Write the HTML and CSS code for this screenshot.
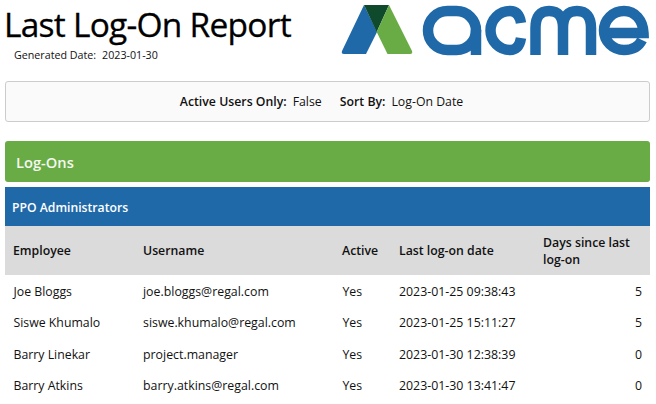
FILE: index.html
```html
<!DOCTYPE html>
<html lang="en">
<head>
<meta charset="utf-8">
<title>Last Log-On Report</title>
<link rel="stylesheet" href="styles.css">
</head>
<body>
<header class="top">
  <div class="heading">
    <h1 class="title">Last Log-On Report</h1>
    <p class="generated"><span>Generated Date:</span><span>2023-01-30</span></p>
  </div>
  <svg class="logo" width="318" height="60" viewBox="338 0 318 60" aria-label="ACME">
    <path d="M342 51 L364 5 L377 32 L366 54 H344 Q341 54 342 51Z" fill="#1f69a9"/>
    <path d="M364 5 H389 L376.7 32Z" fill="#0f4a2c"/>
    <path d="M389 5 L412 51 Q413 54 410 54 H387.5 L376.7 32Z" fill="#69ab45"/>
    <g fill="none" stroke="#1f69a9" stroke-width="10.5">
      <rect x="428" y="11" width="48" height="39" rx="19.5"/>
      <path d="M476 30 V55"/>
      <path d="M521 23 Q519 11 510 11 A19.5 19.5 0 0 0 510 50 Q519 50 521 38"/>
      <path d="M535.5 55 V28 Q535.5 11 549 11 Q563 11 563 28 V55 M563 28 Q563 11 577 11 Q591 11 591 28 V55"/>
      <path d="M604 33 H643.5 C643 20 635 11 624 11 A20 19.5 0 0 0 624 50 C633 50 639 46 642 40"/>
    </g>
  </svg>
</header>
<section class="filters">
  <span class="filter"><b>Active Users Only:</b><span>False</span></span>
  <span class="filter"><b>Sort By:</b><span>Log-On Date</span></span>
</section>
<h2 class="band">Log-Ons</h2>
<h3 class="group">PPO Administrators</h3>
<table class="report">
  <colgroup>
    <col class="c1"><col class="c2"><col class="c3"><col class="c4"><col class="c5">
  </colgroup>
  <thead>
    <tr><th>Employee</th><th>Username</th><th>Active</th><th>Last log-on date</th><th>Days since last log-on</th></tr>
  </thead>
  <tbody>
    <tr><td>Joe Bloggs</td><td class="mail">joe.bloggs@regal.com</td><td>Yes</td><td class="date">2023-01-25 09:38:43</td><td class="num">5</td></tr>
    <tr><td>Siswe Khumalo</td><td class="mail">siswe.khumalo@regal.com</td><td>Yes</td><td class="date">2023-01-25 15:11:27</td><td class="num">5</td></tr>
    <tr><td>Barry Linekar</td><td class="mail">project.manager</td><td>Yes</td><td class="date">2023-01-30 12:38:39</td><td class="num">0</td></tr>
    <tr><td>Barry Atkins</td><td class="mail">barry.atkins@regal.com</td><td>Yes</td><td class="date">2023-01-30 13:41:47</td><td class="num">0</td></tr>
  </tbody>
</table>
</body>
</html>
```
FILE: styles.css
```css
* { box-sizing: border-box; }
html, body { margin: 0; height: 100%; overflow: hidden; }
body {
  padding: 0 6px 0 5px;
  background: #fff;
  color: #111;
  font-family: "Open Sans", "Noto Sans", sans-serif;
  font-size: 12.3px;
}
.top { display: flex; justify-content: space-between; height: 81px; }
.title { margin: 0 0 0 -1px; padding-top: 2px; font-size: 33.5px; line-height: 44px; font-weight: 400; color: #000; letter-spacing: -0.75px; -webkit-text-stroke: 0.3px #000; }
.generated { margin: 2px 0 0 9px; display: flex; gap: 6px; font-size: 10.7px; line-height: 14px; }
.logo { display: block; margin: 0 -6px 0 0; flex: none; }
.filters {
  height: 41px;
  display: flex;
  justify-content: center;
  align-items: center;
  gap: 18px;
  padding-right: 12px;
  background: #fafafa;
  border: 1px solid #ccc;
  border-radius: 3px;
}
.filter { display: flex; gap: 6px; }
.filter b { font-weight: 600; }
.band {
  margin: 19px 0 5px;
  height: 41px;
  padding: 1px 11px 0;
  display: flex;
  align-items: center;
  background: #69ab45;
  color: #f4f8f0;
  border-radius: 3px;
  font-size: 14.7px;
  font-weight: 600;
}
.group {
  margin: 0;
  height: 39px;
  padding: 1px 7px 0;
  display: flex;
  align-items: center;
  background: #1f69a9;
  color: #fff;
  font-size: 12.2px;
  font-weight: 600;
}
.report { width: 100%; table-layout: fixed; border-collapse: collapse; }
.c1 { width: 130px; } .c2 { width: 199px; } .c3 { width: 57px; } .c4 { width: 144px; }
.report th {
  height: 49px;
  padding: 0 8px;
  background: #dbdbdb;
  text-align: left;
  font-weight: 600;
  line-height: 17px;
  color: #111;
}
.report td { height: 31.5px; padding: 1px 8px 0 8.5px; }
.report td.mail { font-size: 12.35px; padding-left: 8px; }
.report td.date { font-size: 12.35px; padding-left: 8px; }
.report td.num { text-align: right; }
```
